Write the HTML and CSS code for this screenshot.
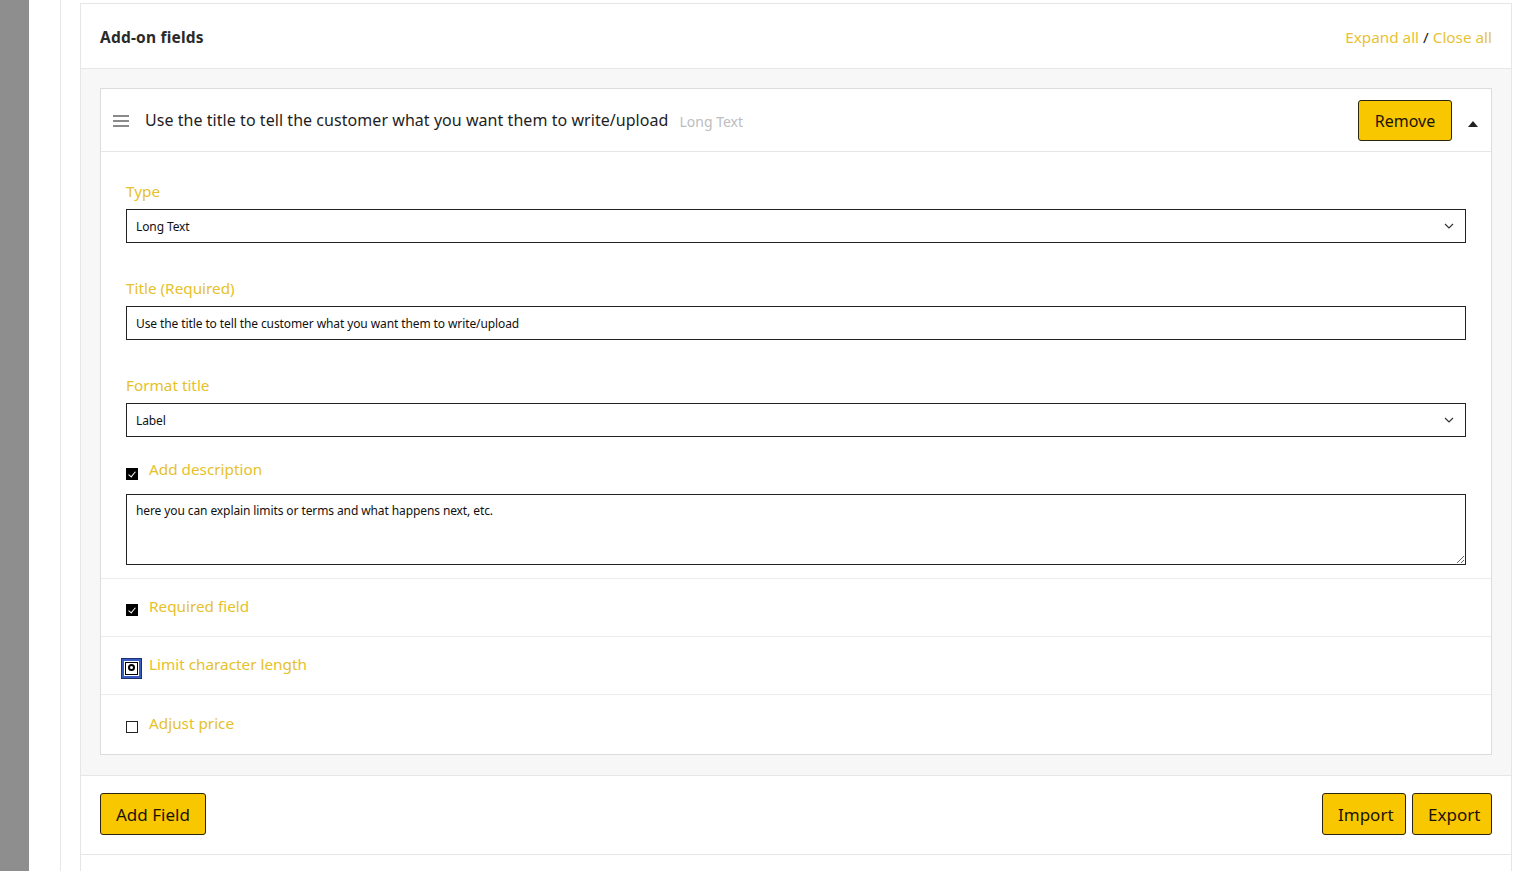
FILE: index.html
```html
<!DOCTYPE html>
<html lang="en">
<head>
<meta charset="utf-8">
<title>Add-on fields</title>
<link rel="stylesheet" href="styles.css">
</head>
<body>
<div class="page">
  <div class="sidebar"></div>
  <div class="main">
    <div class="main-inner">
      <section class="panel">
        <header class="panel-head">
          <h2 class="panel-title">Add-on fields</h2>
          <div class="panel-links"><a class="link">Expand all</a> <span class="slash">/</span> <a class="link">Close all</a></div>
        </header>
        <div class="panel-body">
          <div class="card">
            <div class="card-head">
              <span class="handle">
                <svg width="16" height="12" viewBox="0 0 16 12"><rect x="0" y="0" width="16" height="2" fill="#8a8a8a"/><rect x="0" y="5" width="16" height="2" fill="#8a8a8a"/><rect x="0" y="10" width="16" height="2" fill="#8a8a8a"/></svg>
              </span>
              <span class="card-title">Use the title to tell the customer what you want them to write/upload</span>
              <span class="card-type">Long Text</span>
              <span class="spacer"></span>
              <button class="btn btn-remove">Remove</button>
              <span class="caret">
                <svg width="10" height="6" viewBox="0 0 10 6"><path d="M0 6 L5 0 L10 6 Z" fill="#222"/></svg>
              </span>
            </div>
            <div class="card-body">
              <div class="field">
                <label class="field-label">Type</label>
                <div class="select-wrap">
                  <select class="control select"><option>Long Text</option></select>
                  <svg class="chev" width="10" height="6" viewBox="0 0 10 6"><path d="M1 1 L5 5 L9 1" fill="none" stroke="#333" stroke-width="1.2"/></svg>
                </div>
              </div>
              <div class="field">
                <label class="field-label">Title (Required)</label>
                <input class="control" type="text" value="Use the title to tell the customer what you want them to write/upload">
              </div>
              <div class="field">
                <label class="field-label">Format title</label>
                <div class="select-wrap">
                  <select class="control select"><option>Label</option></select>
                  <svg class="chev" width="10" height="6" viewBox="0 0 10 6"><path d="M1 1 L5 5 L9 1" fill="none" stroke="#333" stroke-width="1.2"/></svg>
                </div>
              </div>
              <div class="check-line">
                <input type="checkbox" class="cb" checked>
                <span class="field-label inline">Add description</span>
              </div>
              <textarea class="control textarea">here you can explain limits or terms and what happens next, etc.</textarea>
            </div>
            <div class="opt-row">
              <input type="checkbox" class="cb" checked>
              <span class="field-label inline">Required field</span>
            </div>
            <div class="opt-row">
              <input type="checkbox" class="cb cb-focus">
              <span class="field-label inline">Limit character length</span>
            </div>
            <div class="opt-row opt-last">
              <input type="checkbox" class="cb">
              <span class="field-label inline">Adjust price</span>
            </div>
          </div>
        </div>
        <footer class="panel-foot">
          <button class="btn btn-lg">Add Field</button>
          <div class="foot-right">
            <button class="btn btn-lg btn-import">Import</button>
            <button class="btn btn-lg btn-export">Export</button>
          </div>
        </footer>
        <div class="panel-after"></div>
      </section>
    </div>
  </div>
</div>
</body>
</html>
```
FILE: styles.css
```css
* { box-sizing: border-box; }
html, body { margin: 0; padding: 0; height: 100%; overflow: hidden; }
body {
  font-family: "Noto Sans", "Open Sans", sans-serif;
  color: #222;
  background: #fff;
}
.page { display: flex; min-height: 871px; }
.sidebar { width: 29px; background: #8e8e8e; flex: none; }
.main { flex: 1; padding-left: 31px; display: flex; }
.main-inner {
  flex: 1;
  border-left: 1px solid #e8e8e8;
  padding: 3px 6px 0 19px;
}
.panel {
  border: 1px solid #e6e6e6;
  border-bottom: none;
  min-height: 900px;
}
.panel-head {
  height: 65px;
  border-bottom: 1px solid #e6e6e6;
  display: flex;
  align-items: center;
  justify-content: space-between;
  padding: 1px 19px 0 19px;
}
.panel-title {
  margin: 0;
  font-size: 15.5px;
  font-weight: 700;
  color: #2a2a2a;
  letter-spacing: 0.2px;
}
.panel-links { font-size: 15.3px; color: #222; }
.link { color: #e8c236; cursor: pointer; }
.slash { color: #222; }
.panel-body {
  background: #f7f7f7;
  padding: 19px 19px 20px 19px;
  border-bottom: 1px solid #e6e6e6;
}
.card {
  background: #fff;
  border: 1px solid #dcdcdc;
}
.card-head {
  height: 63px;
  border-bottom: 1px solid #e6e6e6;
  display: flex;
  align-items: center;
  padding: 0 12px 0 12px;
}
.handle { display: flex; width: 16px; margin-right: 16px; margin-top: 1px; }
.card-title { font-size: 16px; color: #1e1e1e; letter-spacing: 0.05px; }
.card-type { font-size: 14px; color: #bdbdbd; margin-left: 11px; margin-top: 2px; }
.spacer { flex: 1; }
.btn {
  font-family: inherit;
  background: #f9c700;
  border: 1px solid #2a2410;
  border-radius: 3px;
  color: #1a1400;
  cursor: pointer;
}
.btn-remove {
  height: 41px;
  width: 94px;
  font-size: 16px;
  margin-top: 1px;
}
.caret { display: flex; margin-left: 16px; margin-right: 1px; margin-top: 7px; }
.card-body { padding: 28px 25px 13px 25px; }
.field { margin-bottom: 34px; }
.field-label {
  display: block;
  font-size: 15.3px;
  line-height: 22px;
  color: #e6c12a;
  margin-bottom: 7px;
}
.field-label.inline { display: inline-block; margin: 0; }
.control {
  display: block;
  width: 100%;
  height: 34px;
  border: 1px solid #222;
  border-radius: 0;
  background: #fff;
  font-family: inherit;
  font-size: 12px;
  letter-spacing: -0.1px;
  color: #111;
  padding: 0 9px;
  margin: 0;
  outline: none;
}
.select-wrap { position: relative; }
.select { appearance: none; -webkit-appearance: none; }
.chev { position: absolute; right: 12px; top: 14px; pointer-events: none; }
.check-line {
  display: flex;
  align-items: center;
  gap: 11px;
  margin-top: -13px;
  margin-bottom: 14px;
}
.textarea {
  height: 71px;
  resize: vertical;
  padding: 7px 9px;
  line-height: 18px;
}
.cb {
  appearance: none;
  -webkit-appearance: none;
  width: 12px;
  height: 12px;
  margin: 9px 0 0 0;
  border: 1px solid #222;
  background: #fff;
  position: relative;
  flex: none;
}
.cb:checked { background: #000; border-color: #000; }
.cb:checked::after {
  content: "";
  position: absolute;
  left: 3px;
  top: 1px;
  width: 3px;
  height: 6px;
  border: solid #fff;
  border-width: 0 1.5px 1.5px 0;
  transform: rotate(40deg);
}
.cb-focus {
  width: 13px;
  height: 13px;
  margin-top: 9px;
  margin-left: -1px;
  margin-right: 0;
  border: 1.5px solid #000;
  box-shadow: 0 0 0 1px #fff, 0 0 0 3px #3a5bc0, 0 0 0 4px #1c2f70;
}
.cb-focus::after {
  content: "";
  position: absolute;
  left: 1.5px;
  top: 1.5px;
  width: 7px;
  height: 7px;
  border-radius: 50%;
  border: 2px solid #000;
  box-sizing: border-box;
}
.opt-row {
  border-top: 1px solid #ececec;
  height: 58px;
  display: flex;
  align-items: center;
  gap: 11px;
  padding: 0 25px 4px 25px;
}
.opt-last { height: 60px; }
.panel-foot {
  height: 79px;
  border-bottom: 1px solid #e6e6e6;
  display: flex;
  align-items: flex-start;
  justify-content: space-between;
  padding: 17px 19px 0 19px;
}
.btn-lg { height: 42px; font-size: 17px; padding: 0 15px; }
.foot-right { display: flex; gap: 6px; }
.btn-import { width: 84px; }
.btn-export { width: 80px; }
.panel-after { height: 40px; }
```
